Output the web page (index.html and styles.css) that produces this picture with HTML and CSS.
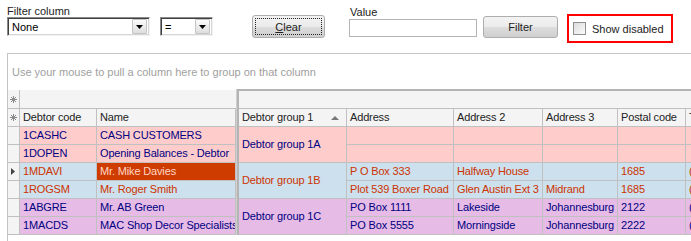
FILE: index.html
```html
<!doctype html>
<html lang="en">
<head>
<meta charset="UTF-8" />
<title>Debtors</title>
<link rel="stylesheet" href="styles.css">
</head>
<body>
<div class="toolbar">
    <div class="field filter-col">
        <label>Filter column</label>
        <div class="combos">
            <div class="combo combo-col"><span>None</span><i class="drop"><svg width="7" height="4" viewBox="0 0 7 4"><path d="M0 0h7L3.5 4z" fill="#000"/></svg></i></div>
            <div class="combo combo-op"><span>=</span><i class="drop"><svg width="7" height="4" viewBox="0 0 7 4"><path d="M0 0h7L3.5 4z" fill="#000"/></svg></i></div>
        </div>
    </div>
    <button class="btn btn-clear"><span class="focus"><u>C</u>lear</span></button>
    <div class="field value-field">
        <label>Value</label>
        <div class="input"></div>
    </div>
    <button class="btn btn-filter">Filter</button>
    <div class="show-disabled">
        <span class="check"></span>
        <span>Show disabled</span>
    </div>
</div>

<div class="grid-box">
    <div class="group-panel">Use your mouse to pull a column here to group on that column</div>
    <div class="grid">
        <!-- top band -->
        <div class="c ind band-l"><svg width="7" height="7" viewBox="0 0 7 7"><path d="M3.5 0v7M0 3.5h7M1 1l5 5M6 1L1 6" stroke="#8a8a8a" stroke-width="1"/></svg></div>
        <div class="c band-l span2"></div>
        <div class="splitter"></div>
        <div class="c band-r"></div>

        <!-- headers -->
        <div class="c ind hd"><svg width="7" height="7" viewBox="0 0 7 7"><path d="M3.5 0v7M0 3.5h7M1 1l5 5M6 1L1 6" stroke="#8a8a8a" stroke-width="1"/></svg></div>
        <div class="c hd">Debtor code</div>
        <div class="c hd">Name</div>
        <div class="c hd sort">Debtor group 1<svg width="8" height="4" viewBox="0 0 8 4"><path d="M4 0L8 4H0z" fill="#777"/></svg></div>
        <div class="c hd">Address</div>
        <div class="c hd">Address 2</div>
        <div class="c hd">Address 3</div>
        <div class="c hd">Postal code</div>
        <div class="c hd">Telephone</div>

        <!-- group 1A -->
        <div class="c ind"></div>
        <div class="c pink">1CASHC</div>
        <div class="c pink">CASH CUSTOMERS</div>
        <div class="c pink grp">Debtor group 1A</div>
        <div class="c pink"></div>
        <div class="c pink"></div>
        <div class="c pink"></div>
        <div class="c pink"></div>
        <div class="c pink"></div>

        <div class="c ind"></div>
        <div class="c pink">1DOPEN</div>
        <div class="c pink">Opening Balances - Debtor</div>
        <div class="c pink"></div>
        <div class="c pink"></div>
        <div class="c pink"></div>
        <div class="c pink"></div>
        <div class="c pink"></div>

        <!-- group 1B -->
        <div class="c ind"><svg width="5" height="7" viewBox="0 0 5 7"><path d="M0 0l4 3.5L0 7z" fill="#444"/></svg></div>
        <div class="c blue">1MDAVI</div>
        <div class="c sel">Mr. Mike Davies</div>
        <div class="c blue grp">Debtor group 1B</div>
        <div class="c blue">P O Box 333</div>
        <div class="c blue">Halfway House</div>
        <div class="c blue"></div>
        <div class="c blue">1685</div>
        <div class="c blue">(011) 805 1234</div>

        <div class="c ind"></div>
        <div class="c blue">1ROGSM</div>
        <div class="c blue">Mr. Roger Smith</div>
        <div class="c blue">Plot 539 Boxer Road</div>
        <div class="c blue">Glen Austin Ext 3</div>
        <div class="c blue">Midrand</div>
        <div class="c blue">1685</div>
        <div class="c blue">(011) 805 4321</div>

        <!-- group 1C -->
        <div class="c ind"></div>
        <div class="c purple">1ABGRE</div>
        <div class="c purple">Mr. AB Green</div>
        <div class="c purple grp">Debtor group 1C</div>
        <div class="c purple">PO Box 1111</div>
        <div class="c purple">Lakeside</div>
        <div class="c purple">Johannesburg</div>
        <div class="c purple">2122</div>
        <div class="c purple">(011) 555 1111</div>

        <div class="c ind"></div>
        <div class="c purple">1MACDS</div>
        <div class="c purple">MAC Shop Decor Specialists</div>
        <div class="c purple">PO Box 5555</div>
        <div class="c purple">Morningside</div>
        <div class="c purple">Johannesburg</div>
        <div class="c purple">2222</div>
        <div class="c purple">(011) 555 5555</div>
    </div>
</div>
</body>
</html>
```

FILE: styles.css
```css
* {
    padding: 0px;
    margin: 0px;
    box-sizing: border-box;
}

html,
body {
    width: 100%;
    height: 100%;
    background: #fff;
    font-family: "Liberation Sans", Arial, sans-serif;
    font-size: 11px;
    color: #000;
    overflow: hidden;
}

/* toolbar */
.toolbar {
    display: flex;
    align-items: flex-start;
    height: 53px;
}

.field label {
    display: block;
    height: 12px;
    line-height: 12px;
    color: #222;
}

.filter-col {
    margin-left: 7px;
    padding-top: 5px;
}

.combos {
    display: flex;
    gap: 10px;
}

.combo {
    display: flex;
    align-items: center;
    justify-content: space-between;
    height: 19px;
    background: #fff;
    border: 1px solid;
    border-color: #8a8a8a #f2f2f2 #f2f2f2 #8a8a8a;
    box-shadow: inset 1px 1px #404040, inset -1px -1px #d6d6d6;
    padding: 0 2px 0 4px;
}

.combo-col {
    width: 143px;
}

.combo-op {
    width: 53px;
}

.combo .drop {
    display: flex;
    align-items: center;
    justify-content: center;
    width: 15px;
    height: 15px;
    border: 1px solid #c4c4c4;
    border-radius: 1px;
    background: linear-gradient(#fbfbfb, #dedede);
}

.btn {
    font-family: inherit;
    font-size: 11px;
    color: #222;
    border: 1px solid #adadad;
    border-radius: 3px;
    background: linear-gradient(#f3f3f3 0%, #ebebeb 50%, #dddddd 51%, #cfcfcf 100%);
}

.btn-clear {
    margin: 15px 0 0 39px;
    width: 73px;
    height: 23px;
    padding: 2px;
}

.btn-clear .focus {
    display: block;
    height: 100%;
    line-height: 16px;
    border: 1px dotted #222;
}

.value-field {
    margin-left: 24px;
    padding-top: 6px;
}

.value-field label {
    height: 13px;
    line-height: 13px;
    padding-left: 1px;
}

.value-field .input {
    width: 128px;
    height: 18px;
    border: 1px solid #b4b4b4;
    background: #fff;
}

.btn-filter {
    margin: 16px 0 0 6px;
    width: 75px;
    height: 22px;
}

.show-disabled {
    display: flex;
    align-items: center;
    gap: 6px;
    margin: 14px 0 0 9px;
    width: 106px;
    height: 29px;
    border: 2px solid #ff0000;
    padding-left: 4px;
    color: #222;
}

.show-disabled .check {
    width: 13px;
    height: 13px;
    border: 1px solid #8e8f8f;
    background: linear-gradient(135deg, #dcdcdc, #fbfbfb);
}

/* grid */
.grid-box {
    margin-left: 7px;
    height: 188px;
    border-left: 1px solid #c4c4c4;
    border-top: 1px solid #c4c4c4;
    overflow: hidden;
}

.group-panel {
    height: 35px;
    line-height: 34px;
    padding-left: 4px;
    padding-top: 1px;
    color: #a0a0a0;
    white-space: nowrap;
}

.grid {
    display: grid;
    grid-template-columns: 12px 77px 139px 3px 108px 107px 89px 75px 68px 40px;
    grid-template-rows: 20px repeat(7, 18px);
    width: 718px;
}

.c {
    border-right: 1px solid #c0c0c0;
    border-bottom: 1px solid #c0c0c0;
    padding: 0 1px 0 3px;
    line-height: 17px;
    letter-spacing: -0.15px;
    white-space: nowrap;
    overflow: hidden;
}

.ind {
    display: flex;
    align-items: center;
    justify-content: center;
    padding: 0;
    background: #f4f4f4;
}

.band-l {
    margin-top: 1px;
    background: #f4f4f4;
}

.span2 {
    grid-column: 2 / span 2;
    border-right: none;
}

.band-r {
    grid-column: 5 / span 6;
    border-top: 2px solid #b4b4b4;
    background: #f4f4f4;
}

.splitter {
    grid-column: 4;
    grid-row: 1 / -1;
    background: #b4b4b4;
    border-left: 1px solid #cfcfcf;
}

.hd {
    background: #f4f4f4;
    color: #222;
}

.sort {
    display: flex;
    align-items: center;
    justify-content: space-between;
    padding-right: 7px;
}

.pink {
    background: #ffcccc;
    color: #000080;
}

.blue {
    background: #cde0ed;
    color: #cc3300;
}

.purple {
    background: #e6bbe6;
    color: #000080;
}

.sel {
    background: #cf3c00;
    color: #ffd6c6;
}

.grp {
    grid-row: span 2;
    display: flex;
    align-items: center;
}
```
